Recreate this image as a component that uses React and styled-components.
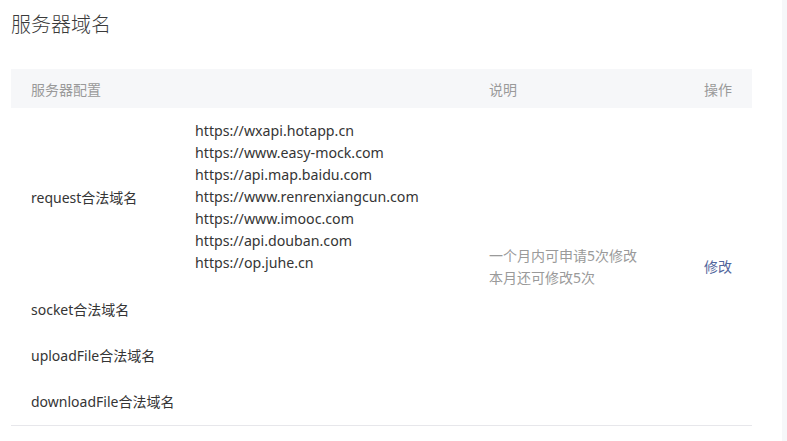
import React from 'react';
import styled, { createGlobalStyle } from 'styled-components';

const GlobalStyle = createGlobalStyle`
  html, body {
    margin: 0;
    padding: 0;
    background: #fff;
    font-family: "Noto Sans", "Noto Sans CJK SC", sans-serif;
    color: #333;
  }
`;

const Page = styled.div`
  display: flex;
  min-height: 441px;
`;

const Main = styled.main`
  flex: 1;
  padding: 0 0 0 11px;
`;

const Gutter = styled.div`
  width: 5px;
  background: #f6f7f9;
`;

const Title = styled.h2`
  margin: 0;
  padding-top: 9px;
  height: 69px;
  box-sizing: border-box;
  font-size: 20px;
  font-weight: 300;
  line-height: 32px;
  color: #3a3a3a;
`;

const Table = styled.div`
  width: 741px;
  display: grid;
  grid-template-columns: 164px 294px 215px 68px;
  border-bottom: 1px solid #e7e7eb;
`;

const HeadCell = styled.div`
  background: #f6f7f9;
  height: 39px;
  display: flex;
  align-items: center;
  padding-left: 20px;
  font-size: 14px;
  color: #9a9a9a;
`;

const Cell = styled.div`
  display: flex;
  align-items: center;
  padding: 12px 0 ${p => (p.tall ? '13px' : '12px')} 20px;
  font-size: 14px;
  line-height: 22px;
  color: ${p => (p.muted ? '#9a9a9a' : '#353535')};
  grid-column: ${p => p.col || 'auto'};
  grid-row: ${p => p.row || 'auto'};
`;

const UrlList = styled.ul`
  list-style: none;
  margin: 0;
  padding: 0;
  font-size: 14.2px;
  line-height: 22px;
  color: #353535;
`;

const Note = styled.div`
  display: flex;
  flex-direction: column;
`;

const ActionLink = styled.a`
  color: #52669c;
  text-decoration: none;
  font-size: 14px;
  cursor: pointer;
`;

const urls = [
  'https://wxapi.hotapp.cn',
  'https://www.easy-mock.com',
  'https://api.map.baidu.com',
  'https://www.renrenxiangcun.com',
  'https://www.imooc.com',
  'https://api.douban.com',
  'https://op.juhe.cn',
];

const labels = ['socket合法域名', 'uploadFile合法域名', 'downloadFile合法域名'];

export default function App() {
  return (
    <>
      <GlobalStyle />
      <Page>
        <Main>
          <Title>服务器域名</Title>
          <Table>
            <HeadCell>服务器配置</HeadCell>
            <HeadCell />
            <HeadCell>说明</HeadCell>
            <HeadCell>操作</HeadCell>

            <Cell col="1" row="2">request合法域名</Cell>
            <Cell col="2" row="2" tall>
              <UrlList>
                {urls.map(u => <li key={u}>{u}</li>)}
              </UrlList>
            </Cell>
            <Cell col="3" row="2 / span 4" muted>
              <Note>
                <span>一个月内可申请5次修改</span>
                <span>本月还可修改5次</span>
              </Note>
            </Cell>
            <Cell col="4" row="2 / span 4">
              <ActionLink>修改</ActionLink>
            </Cell>

            {labels.map((l, i) => (
              <Cell key={l} col="1 / span 2" row={String(i + 3)}>{l}</Cell>
            ))}
          </Table>
        </Main>
        <Gutter />
      </Page>
    </>
  );
}
